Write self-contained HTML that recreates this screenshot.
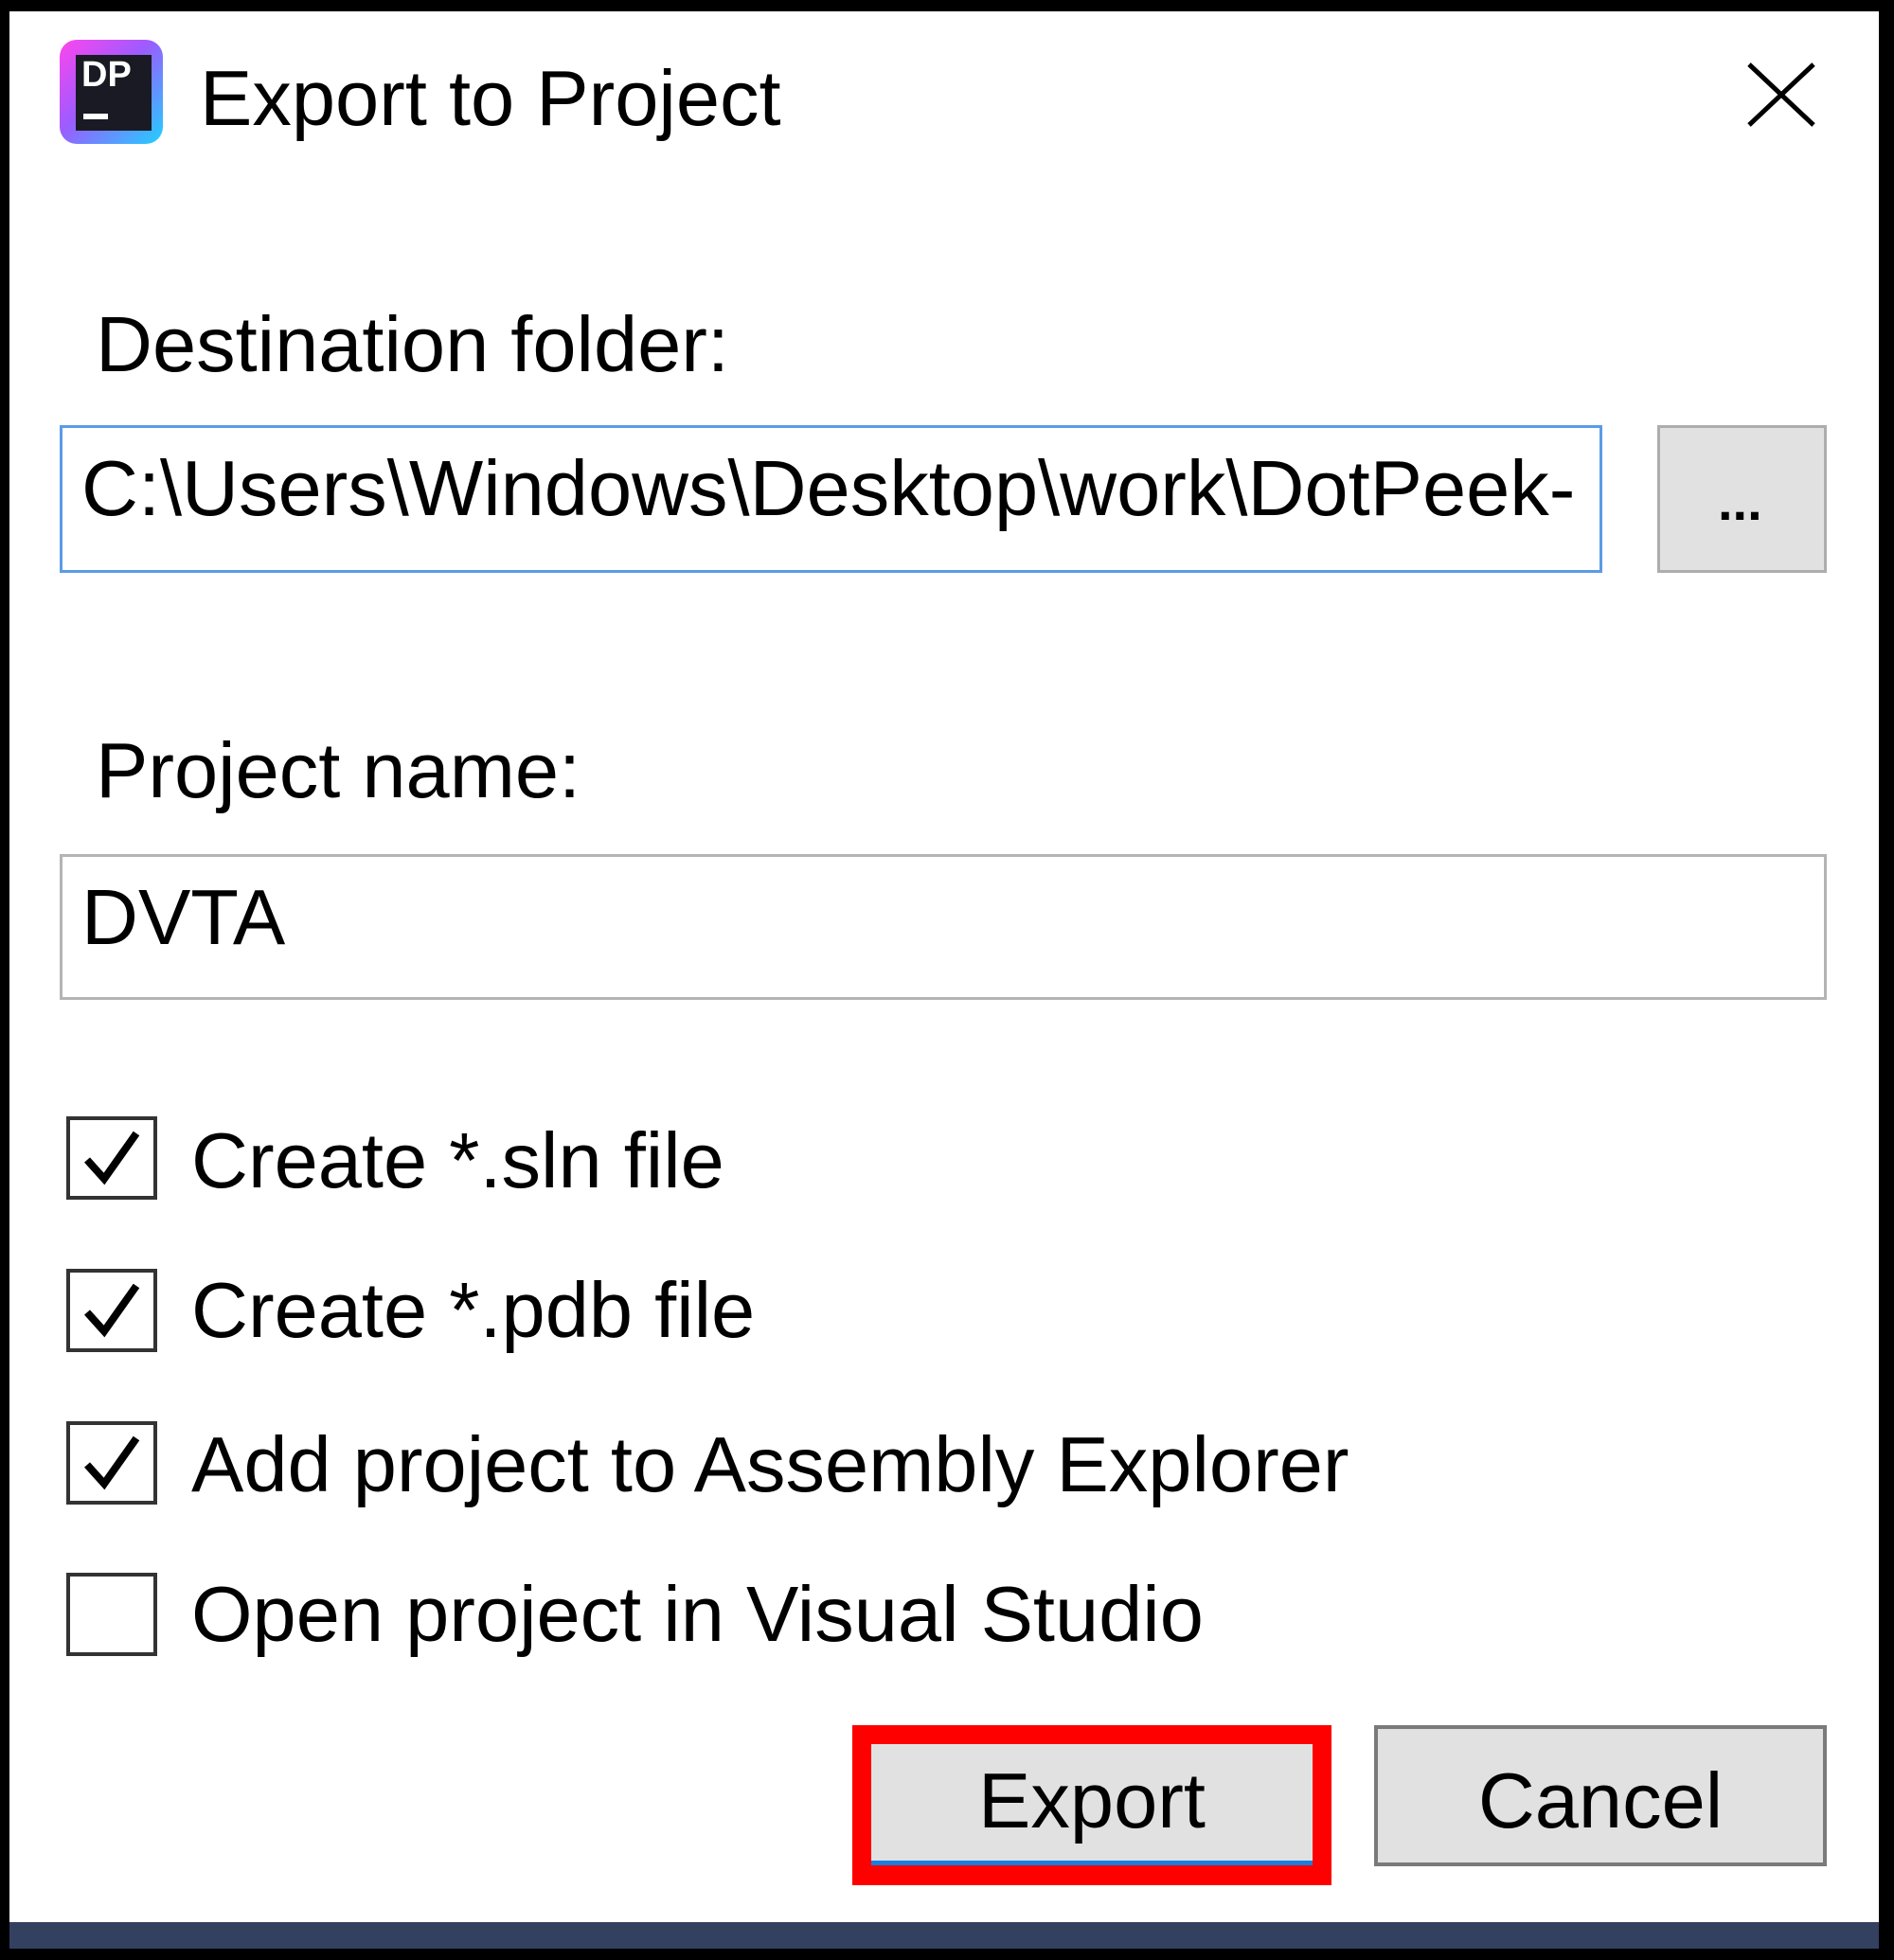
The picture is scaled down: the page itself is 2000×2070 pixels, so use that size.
<!DOCTYPE html>
<html><head><meta charset="utf-8"><style>
*{margin:0;padding:0;box-sizing:border-box}
body{width:2000px;height:2070px;background:#000;position:relative;overflow:hidden;font-family:"Liberation Sans",sans-serif;color:#000}
.win{position:absolute;left:10px;top:12px;width:1974px;height:2018px;background:#fff}
.bar{position:absolute;left:10px;top:2030px;width:1974px;height:28px;background:#334060}
.t{position:absolute;font-size:83px;line-height:83px;white-space:nowrap}
.box{position:absolute}
.cb{position:absolute;left:70px;width:96px;height:88px;border:4px solid #333;background:#fff}
.cb svg{position:absolute;left:8px;top:6px}
</style></head><body>
<div class="win"></div>
<div class="bar"></div>
<div class="box" style="left:63px;top:42px;width:109px;height:110px;border-radius:18px;background:linear-gradient(135deg,#ff45ed 0%,#9b5cff 45%,#21d0ff 100%)"></div>
<div class="box" style="left:80px;top:58px;width:80px;height:80px;background:#1a1a24"></div>
<div class="t" style="left:86px;top:60px;font-size:38px;line-height:38px;color:#fff;font-weight:bold">DP</div>
<div class="box" style="left:88px;top:120px;width:26px;height:6px;background:#fff"></div>
<div class="t" style="left:211px;top:62px">Export to Project</div>
<svg class="box" style="left:1845px;top:66px" width="72" height="68"><path d="M2 2L70 66M70 2L2 66" stroke="#000" stroke-width="5"/></svg>
<div class="t" style="left:101px;top:322px">Destination folder:</div>
<div class="box" style="left:63px;top:449px;width:1629px;height:156px;border:3px solid #5b9be6;overflow:hidden">
<div class="t" style="left:20px;top:22px">C:\Users\Windows\Desktop\work\DotPeek-</div></div>
<div class="box" style="left:1750px;top:449px;width:179px;height:156px;background:#e1e1e1;border:3px solid #adadad"></div>
<div class="t" style="left:1814px;top:488px;font-size:56px;font-weight:bold">...</div>
<div class="t" style="left:101px;top:772px">Project name:</div>
<div class="box" style="left:63px;top:902px;width:1866px;height:154px;border:3px solid #b4b4b4"></div>
<div class="t" style="left:86px;top:927px">DVTA</div>
<div class="cb" style="top:1179px"><svg width="72" height="70"><path d="M10 36L28 56L62 8" fill="none" stroke="#000" stroke-width="8"/></svg></div>
<div class="t" style="left:202px;top:1184px">Create *.sln file</div>
<div class="cb" style="top:1340px"><svg width="72" height="70"><path d="M10 36L28 56L62 8" fill="none" stroke="#000" stroke-width="8"/></svg></div>
<div class="t" style="left:202px;top:1342px">Create *.pdb file</div>
<div class="cb" style="top:1501px"><svg width="72" height="70"><path d="M10 36L28 56L62 8" fill="none" stroke="#000" stroke-width="8"/></svg></div>
<div class="t" style="left:202px;top:1505px">Add project to Assembly Explorer</div>
<div class="cb" style="top:1661px"></div>
<div class="t" style="left:202px;top:1663px">Open project in Visual Studio</div>
<div class="box" style="left:900px;top:1822px;width:506px;height:169px;background:#f00"></div>
<div class="box" style="left:920px;top:1842px;width:466px;height:128px;background:#e1e1e1;border-bottom:5px solid #1a7fe0"></div>
<div class="t" style="left:900px;top:1860px;width:506px;text-align:center">Export</div>
<div class="box" style="left:1451px;top:1822px;width:478px;height:149px;background:#e1e1e1;border:4px solid #7a7a7a"></div>
<div class="t" style="left:1451px;top:1860px;width:478px;text-align:center">Cancel</div>
</body></html>
